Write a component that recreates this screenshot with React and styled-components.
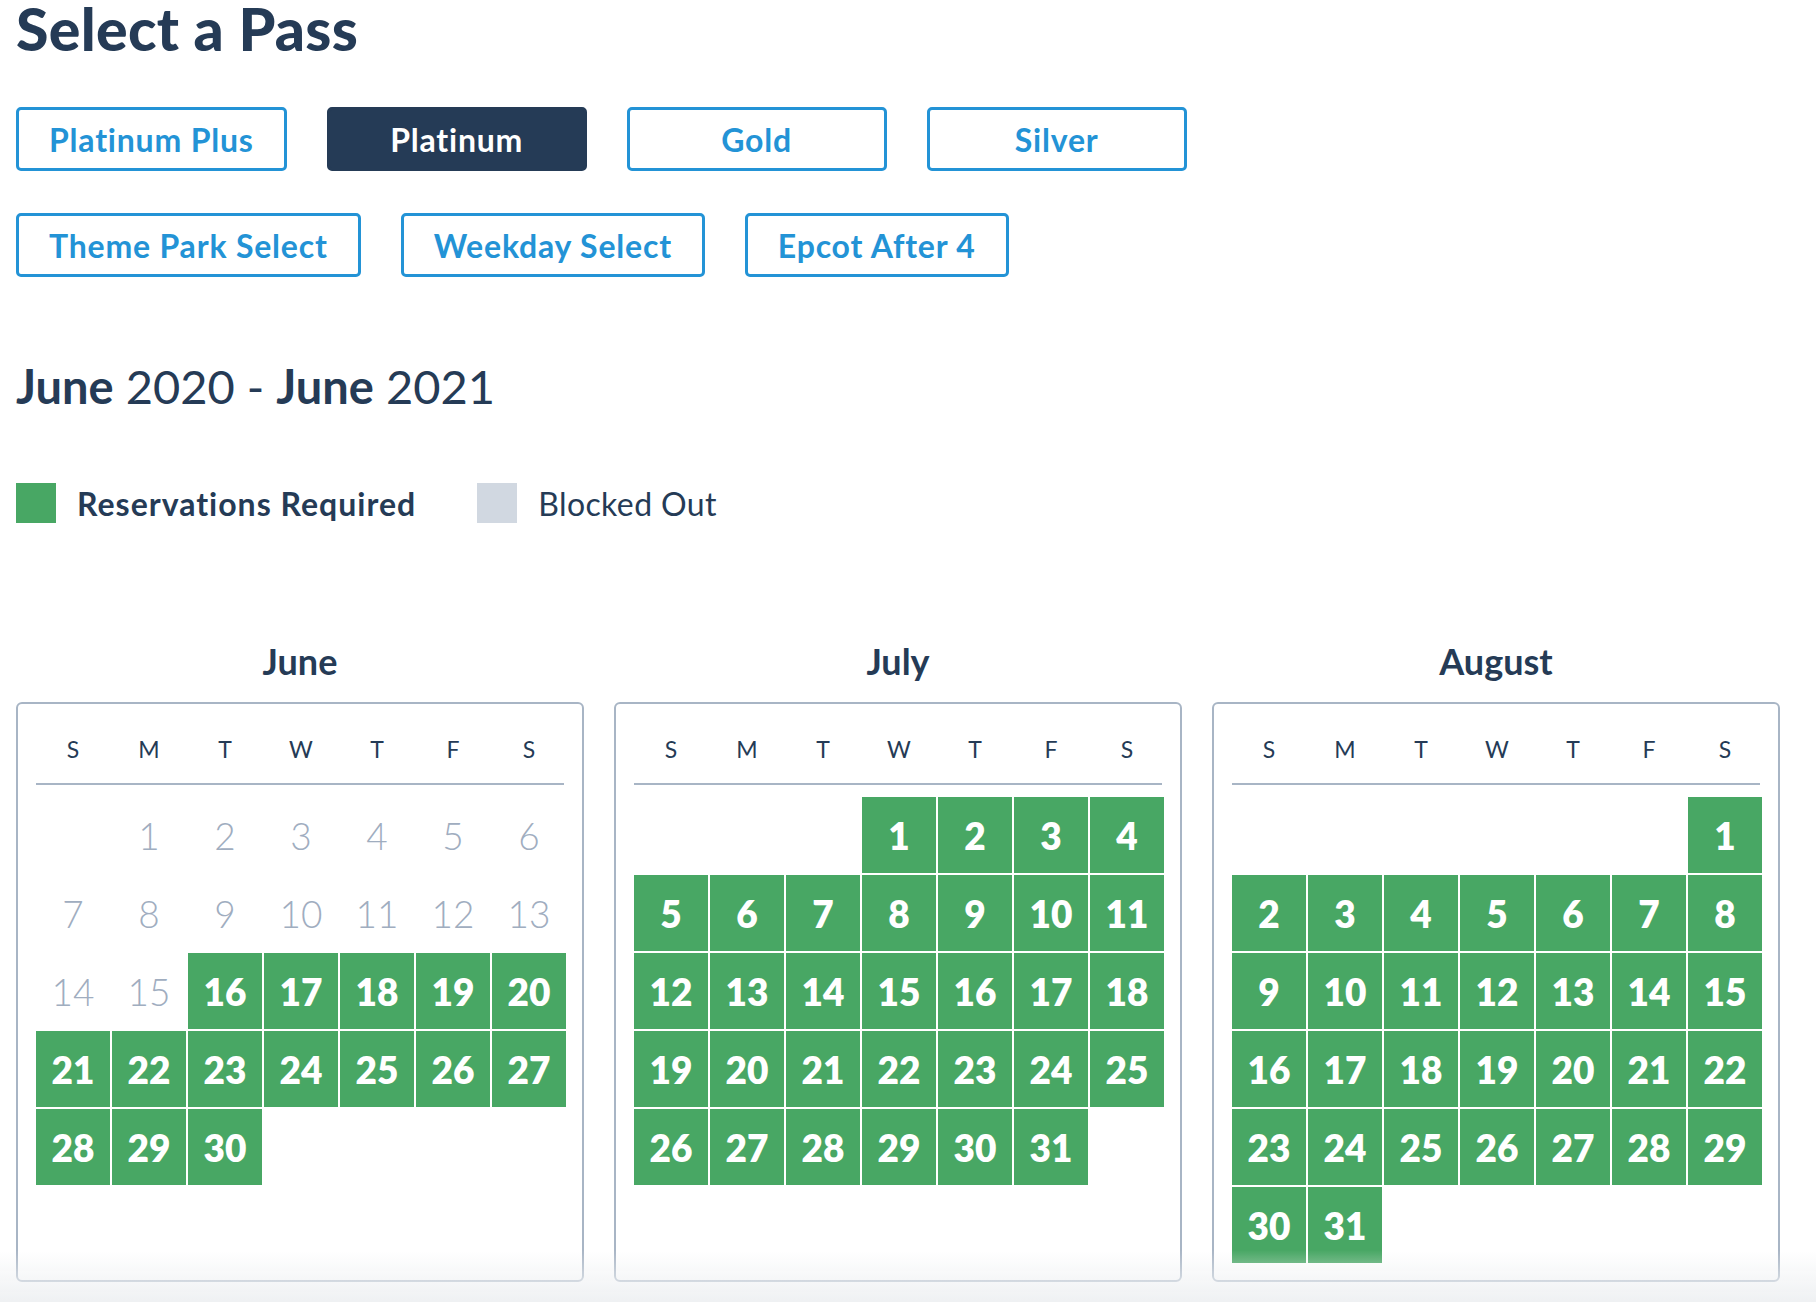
import React from "react";
import styled, { createGlobalStyle } from "styled-components";

const passRows = [
    ['Platinum Plus', 'Platinum', 'Gold', 'Silver'],
    ['Theme Park Select', 'Weekday Select', 'Epcot After 4']
];

const weekdays = ['S', 'M', 'T', 'W', 'T', 'F', 'S'];

// offset = weekday of the 1st, openFrom = first day that needs a reservation
const months = [
    { name: 'June', offset: 1, days: 30, openFrom: 16 },
    { name: 'July', offset: 3, days: 31, openFrom: 1 },
    { name: 'August', offset: 6, days: 31, openFrom: 1 }
];

const GlobalStyle = createGlobalStyle`
  body {
    margin: 0;
    background: #fff;
    font-family: Lato, "Liberation Sans", sans-serif;
    color: #253b56;
  }
`;

const App = () => {
    const selected = 'Platinum';

    return (
        <>
            <GlobalStyle/>
            <Page>
                <Title>Select a Pass</Title>

                <Passes>
                    { passRows.map((row, i) =>
                        <PassRow key={ i }>
                            { row.map(name =>
                                <PassButton key={ name } $active={ name === selected }>{ name }</PassButton>
                            )}
                        </PassRow>
                    )}
                </Passes>

                <Range><b>June</b> 2020 - <b>June</b> 2021</Range>

                <Legend>
                    <LegendItem>
                        <Swatch $color="#48a764"/>
                        <LegendLabel $bold>Reservations Required</LegendLabel>
                    </LegendItem>
                    <LegendItem>
                        <Swatch $color="#d1d8e1"/>
                        <LegendLabel>Blocked Out</LegendLabel>
                    </LegendItem>
                </Legend>

                <Calendars>
                    { months.map(month =>
                        <Month key={ month.name }>
                            <MonthName>{ month.name }</MonthName>
                            <Box>
                                <Weekdays>
                                    { weekdays.map((d, i) => <span key={ i }>{ d }</span>) }
                                </Weekdays>
                                <Days>
                                    { Array.from({ length: month.offset }).map((_, i) => <span key={ 'e' + i }/>) }
                                    { Array.from({ length: month.days }).map((_, i) =>
                                        <Day key={ i } $open={ i + 1 >= month.openFrom }>{ i + 1 }</Day>
                                    )}
                                </Days>
                            </Box>
                        </Month>
                    )}
                </Calendars>
            </Page>
            <Fade/>
        </>
    );
};

const Page = styled.div`
  padding: 0 16px;
`;

const Title = styled.h1`
  margin: 0;
  font-size: 59px;
  line-height: 58px;
  font-weight: 900;
  letter-spacing: 0.3px;
`;

const Passes = styled.div`
  margin-top: 49px;
  display: flex;
  flex-direction: column;
  gap: 42px;
`;

const PassRow = styled.div`
  display: flex;
  gap: 40px;
`;

const PassButton = styled.button`
  box-sizing: border-box;
  height: 64px;
  min-width: 260px;
  padding: 0 30px;
  border: 3px solid ${ props => props.$active ? '#253b56' : '#2393d6' };
  border-radius: 5px;
  background: ${ props => props.$active ? '#253b56' : '#fff' };
  color: ${ props => props.$active ? '#fff' : '#2393d6' };
  font-family: Lato, "Liberation Sans", sans-serif;
  font-size: 32px;
  font-weight: 700;
  letter-spacing: 0.8px;
  cursor: pointer;
`;

const Range = styled.h2`
  margin: 81px 0 0;
  font-size: 47px;
  line-height: 56px;
  font-weight: 400;

  b {
    font-weight: 700;
  }
`;

const Legend = styled.div`
  margin-top: 69px;
  display: flex;
  align-items: center;
  gap: 61px;
`;

const LegendItem = styled.div`
  display: flex;
  align-items: center;
  gap: 21px;
`;

const Swatch = styled.span`
  width: 40px;
  height: 40px;
  background: ${ props => props.$color };
`;

const LegendLabel = styled.span`
  font-size: 32px;
  font-weight: ${ props => props.$bold ? 700 : 400 };
  letter-spacing: ${ props => props.$bold ? '1px' : '0.4px' };
`;

const Calendars = styled.div`
  margin-top: 118px;
  display: grid;
  grid-template-columns: repeat(3, 568px);
  gap: 30px;
`;

const Month = styled.div`
  display: flex;
  flex-direction: column;
`;

const MonthName = styled.h3`
  margin: 0 0 21px;
  text-align: center;
  font-size: 36px;
  line-height: 40px;
  font-weight: 700;
`;

const Box = styled.div`
  flex: 1;
  border: 2px solid #a8b5c5;
  border-radius: 6px;
  padding: 0 18px 17px;
`;

const Weekdays = styled.div`
  display: grid;
  grid-template-columns: repeat(7, 74px);
  column-gap: 2px;
  padding: 22px 0 11px;
  border-bottom: 2px solid #a8b5c5;
  font-size: 23px;
  line-height: 46px;
  text-align: center;
`;

const Days = styled.div`
  margin-top: 12px;
  display: grid;
  grid-template-columns: repeat(7, 74px);
  grid-auto-rows: 76px;
  gap: 2px;
`;

const Day = styled.span`
  display: flex;
  align-items: center;
  justify-content: center;
  font-size: 37px;
  font-weight: ${ props => props.$open ? 800 : 300 };
  color: ${ props => props.$open ? '#fff' : '#a0adbf' };
  background: ${ props => props.$open ? '#48a764' : 'transparent' };
`;

const Fade = styled.div`
  position: fixed;
  left: 0;
  right: 0;
  bottom: 0;
  height: 52px;
  pointer-events: none;
  background: linear-gradient(rgba(240, 241, 243, 0), #eff1f3);
`;

export default App;
